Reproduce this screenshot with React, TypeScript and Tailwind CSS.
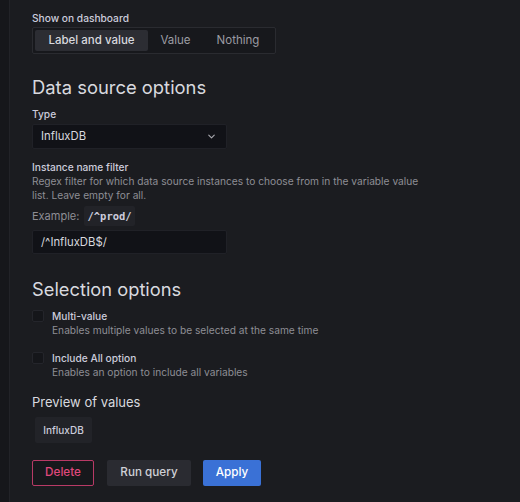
import { ChevronDown } from "lucide-react";

function Label({ children }: { children: React.ReactNode }) {
  return <div className="text-[10.2px] leading-[16px] font-medium text-[#ccccdc]">{children}</div>;
}

function Check({ title, desc, className }: { title: string; desc: string; className?: string }) {
  return (
    <div className={`flex gap-[8px] ${className ?? ""}`}>
      <div className="mt-[1px] size-[12px] rounded-[2px] bg-[#15161a] border border-[#24252b]" />
      <div className="flex flex-col">
        <span className="text-[10.2px] leading-[14px] font-medium text-[#ccccdc]">{title}</span>
        <span className="text-[10.2px] leading-[14px] text-[#8e8e95]">{desc}</span>
      </div>
    </div>
  );
}

export default function App() {
  return (
    <div className="font-['Inter',sans-serif] flex w-[520px] h-[502px] bg-[#1b1c20] overflow-hidden">
      <div className="w-[10px] shrink-0 bg-[#16171b] border-r border-[#222328]" />
      <div className="flex flex-col pl-[22px] pt-[10px]">
        {/* Show on dashboard */}
        <Label>Show on dashboard</Label>
        <div className="mt-[1px] flex w-[244px] h-[27px] p-[2px] rounded-[2px] border border-[#2a2b30] bg-[#17181c] text-[11.5px]">
          <div className="w-[113px] flex items-center justify-center rounded-[2px] bg-[#2c2d33] text-[#d8d9df] font-medium">
            Label and value
          </div>
          <div className="w-[55px] flex items-center justify-center text-[#9c9ca3]">Value</div>
          <div className="flex-1 flex items-center justify-center text-[#9c9ca3]">Nothing</div>
        </div>

        {/* Data source options */}
        <h2 className="mt-[21px] text-[18.4px] leading-[24px] text-[#d8d9df]">Data source options</h2>
        <div className="mt-[7px]">
          <Label>Type</Label>
        </div>
        <div className="mt-[2px] w-[195px] h-[25px] flex items-center justify-between pl-[8px] pr-[9px] rounded-[2px] bg-[#111217] border border-[#202127] text-[11.3px] text-[#d8d9df]">
          <span>InfluxDB</span>
          <ChevronDown className="size-[11px] text-[#a8a8ae]" strokeWidth={2.5} />
        </div>

        <div className="mt-[10px]">
          <Label>Instance name filter</Label>
        </div>
        <p className="w-[400px] text-[10.2px] leading-[13.5px] text-[#8e8e95]">
          Regex filter for which data source instances to choose from in the variable value list. Leave empty for all.
        </p>
        <div className="mt-[4px] flex items-center gap-[5px] text-[11px] text-[#8e8e95]">
          <span>Example:</span>
          <code className="font-['DejaVu_Sans_Mono',monospace] text-[10.5px] leading-[20px] px-[3px] rounded-[2px] bg-[#222328] text-[#ccccdc] font-semibold">
            /^prod/
          </code>
        </div>
        <div className="mt-[4px] w-[195px] h-[24px] flex items-center pl-[8px] rounded-[2px] bg-[#111217] border border-[#202127] text-[11.3px] text-[#d8d9df]">
          /^InfluxDB$/
        </div>

        {/* Selection options */}
        <h2 className="mt-[23px] text-[18.3px] leading-[24px] text-[#d8d9df]">Selection options</h2>
        <Check className="mt-[8px]" title="Multi-value" desc="Enables multiple values to be selected at the same time" />
        <Check className="mt-[14px]" title="Include All option" desc="Enables an option to include all variables" />

        <div className="mt-[14px] text-[13px] leading-[18px] text-[#d8d9df]">Preview of values</div>
        <div className="mt-[6px] ml-[3px] w-[57px] h-[26px] flex items-center justify-center rounded-[2px] bg-[#222328] text-[10px] font-medium text-[#ccccdc]">
          InfluxDB
        </div>

        <div className="mt-[17px] flex gap-[13px]">
          <button className="w-[62px] h-[26px] rounded-[2px] border border-[#b83a66] bg-[#17181c] text-[11.7px] font-medium text-[#e0487c]">
            Delete
          </button>
          <button className="w-[84px] h-[26px] rounded-[2px] bg-[#2a2b31] text-[11.7px] font-medium text-[#cfd0d6]">
            Run query
          </button>
          <button className="-ml-[1px] w-[58px] h-[26px] rounded-[2px] bg-[#3a71d6] text-[11.7px] font-medium text-white">
            Apply
          </button>
        </div>
      </div>
    </div>
  );
}
